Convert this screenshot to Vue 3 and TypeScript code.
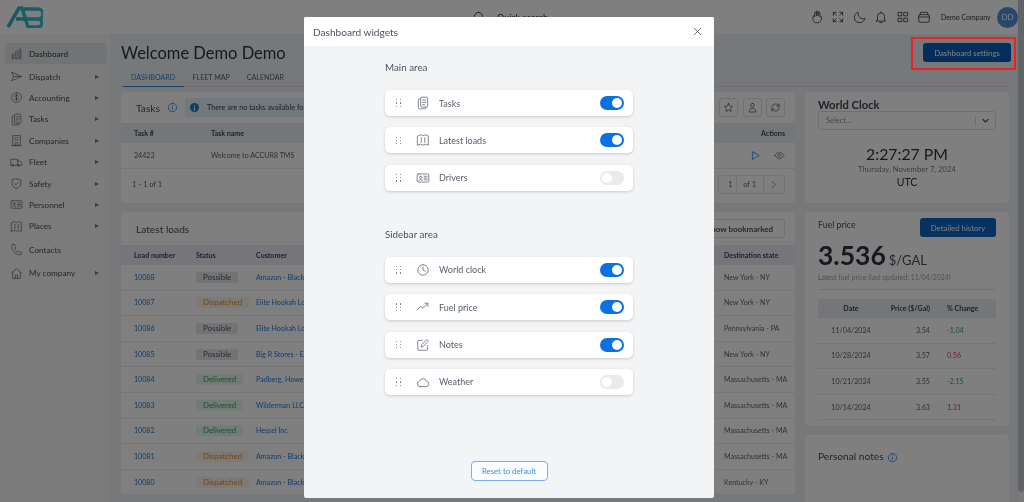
<script setup lang="ts">
const icons: Record<string, string[]> = {
  chart: ['M4 21v-7a1.5 1.5 0 0 1 3 0v7zM10.500 21V9a1.500 1.500 0 0 1 3 0v12zM17 21V5a1.500 1.500 0 0 1 3 0v16z'],
  send: ['M3 4l18 8-18 8 3.500-8zM6.500 12H21'],
  dollar: ['M12 3a9 9 0 1 0 0 18 9 9 0 1 0 0-18', 'M15 9.300c-.5-1-1.500-1.500-3-1.500-2 0-3 1-3 2.100s1 1.800 3 2.100 3 1 3 2.100-1 2.100-3 2.100c-1.500 0-2.500-.5-3-1.500M12 6v12'],
  tasks: ['M8 5h-2a2 2 0 0 0-2 2v13a2 2 0 0 0 2 2h9a2 2 0 0 0 2-2v-1', 'M8 4a2 2 0 0 1 2-2h8a2 2 0 0 1 2 2v13a2 2 0 0 1-2 2h-8a2 2 0 0 1-2-2z', 'M11 7h6M11 11h6M11 15h4'],
  building: ['M5 21V3h14v18zM3 21h18M9 7h2M13 7h2M9 11h2M13 11h2M10 21v-5h4v5'],
  truck: ['M2 6h12v11H2zM14 9h4l4 4v4h-8M7 17a2 2 0 1 0 0 .1M18 17a2 2 0 1 0 0 .1'],
  shield: ['M12 3l8 3v6c0 5-3.500 8-8 9-4.500-1-8-4-8-9V6z', 'M8.500 12l2.500 2.500 4.500-4.500'],
  card: ['M4 5h16a2 2 0 0 1 2 2v10a2 2 0 0 1-2 2H4a2 2 0 0 1-2-2V7a2 2 0 0 1 2-2z', 'M8 9a1.800 1.800 0 1 0 0 3.600A1.800 1.800 0 1 0 8 9M5 16c.5-2 5.500-2 6 0M14 9h5M14 12h5M14 15h5'],
  map: ['M3 5l5-2 4 2 4-2 5 2v16l-5-2-4 2-4-2-5 2zM9 8v8M15 8v8'],
  phone: ['M5 3l3-1 3 5-2 2c.5 3 3 6.500 6 8l2-2 5 3-1 3c-1 1-3 1-5 .5C9 20 3.500 13 3 7c0-2 1-3 2-4z'],
  house: ['M3 11l9-8 9 8M5 9.500V21h14V9.500M10 21v-6h4v6'],
  clock: ['M12 3a9 9 0 1 0 0 18 9 9 0 1 0 0-18', 'M12 7v5l3.500 2'],
  trend: ['M2 17l6-6 4 3 8-8M15 5.500h5.500V11'],
  edit: ['M20 13v6a2 2 0 0 1-2 2H5a2 2 0 0 1-2-2V6a2 2 0 0 1 2-2h6', 'M9 15l.7-3.500L18.500 2.700l2.800 2.800-8.800 8.800z'],
  cloud: ['M7 20h10.500a4.500 4.500 0 0 0 .8-8.900A6.500 6.500 0 0 0 6 10.500 4.800 4.800 0 0 0 7 20z'],
  hand: ['M8 11V5a1.500 1.500 0 0 1 3 0v5-7a1.500 1.500 0 0 1 3 0v7-5.500a1.500 1.500 0 0 1 3 0V12c1-1.500 3-1 3 .5 0 5-2 9.500-8 9.500-5 0-7-3-7-7v-3a1.500 1.500 0 0 1 3-1z'],
  expand: ['M4 9V4h5M4 4l5 5M20 9V4h-5M20 4l-5 5M4 15v5h5M4 20l5-5M20 15v5h-5M20 20l-5-5'],
  moon: ['M20 15A9 9 0 0 1 9 4a9 9 0 1 0 11 11z'],
  bell: ['M6 17V11a6 6 0 0 1 12 0v6l2 2H4zM10 21.500h4M12 3v2'],
  grid: ['M4 4h6v6H4zM14 4h6v6h-6zM4 14h6v6H4zM14 14h6v6h-6z'],
  wallet: ['M3 10a2 2 0 0 1 2-2h14a2 2 0 0 1 2 2v9a2 2 0 0 1-2 2H5a2 2 0 0 1-2-2zM5 8l1-4h12l1 4M3 12h18'],
  star: ['M12 3l2.800 5.800 6.200.9-4.500 4.400 1.100 6.300L12 17.400 6.400 20.400l1.100-6.300L3 9.700l6.200-.9z'],
  user: ['M12 3a4 4 0 1 0 0 8 4 4 0 1 0 0-8M5 21v-2c0-3 3-5 7-5s7 2 7 5v2z'],
  refresh: ['M4 11a8 8 0 0 1 14-4l2 2M20 4v5h-5M20 13a8 8 0 0 1-14 4l-2-2M4 20v-5h5'],
  play: ['M6 4l14 8-14 8z'],
  eye: ['M2 12c3-5 6.500-7 10-7s7 2 10 7c-3 5-6.500 7-10 7s-7-2-10-7z', 'M12 8.500a3.500 3.500 0 1 0 0 7 3.500 3.500 0 1 0 0-7'],
  info: ['M12 3a9 9 0 1 0 0 18 9 9 0 1 0 0-18', 'M12 11v5M12 7.500v.5'],
  right: ['M9 5l7 7-7 7'],
  down: ['M5 9l7 7 7-7'],
  search: ['M11 4a7 7 0 1 0 0 14 7 7 0 1 0 0-14M16 16l5 5'],
  close: ['M5 5l14 14M19 5L5 19'],
}

const nav = [
  { label: 'Dashboard', icon: 'chart', arrow: false, cls: 'active' },
  { label: 'Dispatch', icon: 'send', arrow: true, cls: '' },
  { label: 'Accounting', icon: 'dollar', arrow: true, cls: '' },
  { label: 'Tasks', icon: 'tasks', arrow: true, cls: '' },
  { label: 'Companies', icon: 'building', arrow: true, cls: '' },
  { label: 'Fleet', icon: 'truck', arrow: true, cls: '' },
  { label: 'Safety', icon: 'shield', arrow: true, cls: '' },
  { label: 'Personnel', icon: 'card', arrow: true, cls: '' },
  { label: 'Places', icon: 'map', arrow: true, cls: '' },
  { label: 'Contacts', icon: 'phone', arrow: false, cls: 'tall' },
  { label: 'My company', icon: 'house', arrow: true, cls: 'tall' },
]
const headerIcons = ['hand', 'expand', 'moon', 'bell', 'grid', 'wallet']
const loads = [
  ['10088', 'Possible', 'Amazon - Black Rock', 'New York - NY'],
  ['10087', 'Dispatched', 'Elite Hookah Lounge', 'New York - NY'],
  ['10086', 'Possible', 'Elite Hookah Lounge', 'Pennsylvania - PA'],
  ['10085', 'Possible', 'Big R Stores - East', 'New York - NY'],
  ['10084', 'Delivered', 'Padberg, Howell and Co', 'Massachusetts - MA'],
  ['10083', 'Delivered', 'Wilderman LLC', 'Massachusetts - MA'],
  ['10082', 'Delivered', 'Hessel Inc', 'Massachusetts - MA'],
  ['10081', 'Dispatched', 'Amazon - Black Rock', 'Massachusetts - MA'],
  ['10080', 'Dispatched', 'Amazon - Black Rock', 'Kentucky - KY'],
]
const fuel = [
  ['11/04/2024', '3.54', '-1.04', 'good'],
  ['10/28/2024', '3.57', '0.56', 'bad'],
  ['10/21/2024', '3.55', '-2.15', 'good'],
  ['10/14/2024', '3.63', '1.31', 'bad'],
]
const mainWidgets = [
  { label: 'Tasks', icon: 'tasks', on: true },
  { label: 'Latest loads', icon: 'map', on: true },
  { label: 'Drivers', icon: 'card', on: false },
]
const sideWidgets = [
  { label: 'World clock', icon: 'clock', on: true },
  { label: 'Fuel price', icon: 'trend', on: true },
  { label: 'Notes', icon: 'edit', on: true },
  { label: 'Weather', icon: 'cloud', on: false },
]
const groups = [
  { title: 'Main area', items: mainWidgets },
  { title: 'Sidebar area', items: sideWidgets },
]
</script>

<template>
  <div class="root">
    <div class="page">
      <header class="topbar">
        <svg class="logo" viewBox="0 0 36 22" fill="none">
          <defs>
            <linearGradient id="lg" x1="0" y1="0" x2="1" y2="0">
              <stop offset="0" stop-color="#3fa6c9" />
              <stop offset="1" stop-color="#2fc4cf" />
            </linearGradient>
          </defs>
          <path d="M1 21L12 2h3l6 19" stroke="url(#lg)" stroke-width="3.500" />
          <path d="M9 13h23M17 3h14a4 4 0 0 1 0 10 4 4 0 0 1 0 8H20" stroke="url(#lg)" stroke-width="3.500" />
        </svg>
        <div class="search">
          <svg class="ic14" viewBox="0 0 24 24"><path v-for="d in icons.search" :key="d" :d="d" /></svg>
          <span>Quick search...</span>
        </div>
        <div class="top-right">
          <svg v-for="name in headerIcons" :key="name" class="ic13" viewBox="0 0 24 24">
            <path v-for="d in icons[name]" :key="d" :d="d" />
          </svg>
          <span class="company">Demo Company</span>
          <span class="avatar">DD</span>
        </div>
      </header>

      <div class="below">
        <nav class="sidebar">
          <a v-for="item in nav" :key="item.label" class="nav-item" :class="item.cls">
            <svg class="ic13" viewBox="0 0 24 24"><path v-for="d in icons[item.icon]" :key="d" :d="d" /></svg>
            <span class="nav-label">{{ item.label }}</span>
            <span v-if="item.arrow" class="nav-arrow"></span>
          </a>
        </nav>

        <main class="content">
          <div class="head-row">
            <h1>Welcome Demo Demo</h1>
            <button class="primary settings">Dashboard settings</button>
          </div>
          <div class="tabs">
            <span class="tab current">DASHBOARD</span>
            <span class="tab">FLEET MAP</span>
            <span class="tab">CALENDAR</span>
          </div>

          <div class="columns">
            <div class="col-main">
              <section class="card tasks">
                <div class="card-head">
                  <h2>Tasks</h2>
                  <svg class="ic10 blue" viewBox="0 0 24 24"><path v-for="d in icons.info" :key="d" :d="d" /></svg>
                  <div class="alert">
                    <span class="alert-dot">i</span>
                    <span>There are no tasks available for you at the moment</span>
                  </div>
                  <div class="tool-btns">
                    <span v-for="n in ['star', 'user', 'refresh']" :key="n" class="tool">
                      <svg class="ic10" viewBox="0 0 24 24"><path v-for="d in icons[n]" :key="d" :d="d" /></svg>
                    </span>
                  </div>
                </div>
                <div class="t-row t-head task-grid">
                  <span>Task #</span><span>Task name</span><span class="end">Actions</span>
                </div>
                <div class="t-row task-grid task-body">
                  <span>24423</span><span>Welcome to ACCUR8 TMS</span>
                  <span class="row-actions">
                    <svg class="ic10 blue" viewBox="0 0 24 24"><path v-for="d in icons.play" :key="d" :d="d" /></svg>
                    <svg class="ic10" viewBox="0 0 24 24"><path v-for="d in icons.eye" :key="d" :d="d" /></svg>
                  </span>
                </div>
                <div class="t-foot">
                  <span>1 - 1 of 1</span>
                  <div class="pager">
                    <span class="p-cell num">1</span>
                    <span class="p-cell of">of 1</span>
                    <span class="p-cell">
                      <svg class="ic10" viewBox="0 0 24 24"><path v-for="d in icons.right" :key="d" :d="d" /></svg>
                    </span>
                  </div>
                </div>
              </section>

              <section class="card loads">
                <div class="card-head loads-head">
                  <h2>Latest loads</h2>
                  <button class="outline">Show bookmarked</button>
                </div>
                <div class="t-row t-head load-grid">
                  <span>Load number</span><span>Status</span><span>Customer</span><span></span><span>Destination state</span>
                </div>
                <div v-for="row in loads" :key="row[0]" class="t-row load-grid load-row">
                  <span class="link">{{ row[0] }}</span>
                  <span><span class="badge" :class="row[1].toLowerCase()">{{ row[1] }}</span></span>
                  <span class="link clip">{{ row[2] }}</span>
                  <span></span>
                  <span class="muted">{{ row[3] }}</span>
                </div>
              </section>
            </div>

            <div class="col-side">
              <section class="card clock">
                <h3>World Clock</h3>
                <div class="select">
                  <span>Select...</span>
                  <span class="sel-end">
                    <svg class="ic9" viewBox="0 0 24 24"><path v-for="d in icons.down" :key="d" :d="d" /></svg>
                  </span>
                </div>
                <div class="time">2:27:27 PM</div>
                <div class="date">Thursday, November 7, 2024</div>
                <div class="zone">UTC</div>
              </section>

              <section class="card fuel">
                <div class="fuel-top">
                  <span class="fuel-title">Fuel price</span>
                  <button class="primary history">Detailed history</button>
                </div>
                <div class="price"><b>3.536</b><span>$/GAL</span></div>
                <div class="updated">Latest fuel price (last updated: 11/04/2024)</div>
                <div class="f-row f-head">
                  <span>Date</span><span class="end">Price ($/Gal)</span><span class="pct">% Change</span>
                </div>
                <div v-for="row in fuel" :key="row[0]" class="f-row f-body">
                  <span>{{ row[0] }}</span><span class="end">{{ row[1] }}</span>
                  <span class="pct" :class="row[3]">{{ row[2] }}</span>
                </div>
              </section>

              <section class="card notes">
                <h2>Personal notes</h2>
                <svg class="ic10 blue" viewBox="0 0 24 24"><path v-for="d in icons.info" :key="d" :d="d" /></svg>
              </section>
            </div>
          </div>
        </main>
      </div>
    </div>
    <div class="scrollbar"><div class="thumb"></div></div>

    <div class="overlay"></div>
    <div class="marker"></div>

    <div class="modal">
      <div class="modal-head">
        <span>Dashboard widgets</span>
        <svg class="ic10 dark" viewBox="0 0 24 24"><path v-for="d in icons.close" :key="d" :d="d" /></svg>
      </div>
      <div class="modal-body">
        <div class="groups">
          <div v-for="g in groups" :key="g.title" class="group">
            <div class="group-title">{{ g.title }}</div>
            <div class="widget-list">
              <div v-for="w in g.items" :key="w.label" class="widget">
                <span class="dots"><i v-for="n in 6" :key="n"></i></span>
                <svg class="ic13 wicon" viewBox="0 0 24 24"><path v-for="d in icons[w.icon]" :key="d" :d="d" /></svg>
                <span class="w-label">{{ w.label }}</span>
                <span class="switch" :class="{ on: w.on }"><i></i></span>
              </div>
            </div>
          </div>
        </div>
        <button class="reset">Reset to default</button>
      </div>
    </div>
  </div>
</template>

<style>
html, body { margin: 0; overflow: hidden; }
</style>

<style scoped>
.root {
  position: relative;
  display: flex;
  width: 1024px;
  height: 502px;
  overflow: hidden;
  font-family: Lato, "Noto Sans", sans-serif;
  color: #3c4454;
  background: #eef1f5;
  filter: blur(.3px);
}
svg { fill: none; stroke: currentColor; stroke-width: 1.5; stroke-linecap: round; stroke-linejoin: round; flex: none; }
.ic14 { width: 14px; height: 14px; }
.ic13 { width: 14px; height: 14px; }
.ic10 { width: 11px; height: 11px; }
.ic9 { width: 9px; height: 9px; stroke-width: 3; }
.blue { color: #1f86ee; stroke-width: 1.8; }
.dark { color: #333; }
.page { flex: 1; min-width: 0; display: flex; flex-direction: column; }
.scrollbar { width: 6px; background: #f6f6f6; }
.thumb { height: 492px; background: #c2c6cc; border-radius: 0 0 3px 3px; }

.topbar { height: 34px; flex: none; display: flex; align-items: center; background: #fff; }
.logo { width: 36px; height: 22px; margin-left: 7px; stroke-linecap: butt; stroke-linejoin: miter; }
.search { display: flex; align-items: center; gap: 11px; margin-left: 429px; font-size: 9px; color: #333; }
.top-right { margin-left: auto; display: flex; align-items: center; gap: 7.500px; }
.company { font-size: 7px; margin-left: 2.500px; margin-right: -1.500px; width: 50px; color: #333; white-space: nowrap; }
.avatar { width: 21px; height: 21px; border-radius: 50%; background: #4f8fdc; color: #fff; font-size: 8px; display: flex; align-items: center; justify-content: center; }

.below { flex: 1; min-height: 0; display: flex; }
.sidebar { width: 110px; flex: none; box-sizing: border-box; padding: 9px 3px 0 5px; background: #f6f7f9; }
.nav-item { display: flex; align-items: center; height: 21.400px; padding: 0 5px; font-size: 8.200px; color: #444d5c; border-radius: 4px; }
.nav-item.active { background: #e5e7ea; margin-bottom: 1.500px; color: #333; }
.nav-item.tall { margin-top: 2px; }
.nav-item svg { width: 13px; height: 13px; color: #5c6470; stroke-width: 1.300; }
.nav-label { margin-left: 6px; flex: 1; }
.nav-arrow { width: 0; height: 0; border-left: 4px solid #777; border-top: 2.500px solid transparent; border-bottom: 2.500px solid transparent; margin-right: 3px; }

.content { flex: 1; min-width: 0; box-sizing: border-box; padding: 0 8px 0 11px; }
.head-row { display: flex; justify-content: space-between; align-items: flex-start; height: 33px; padding-top: 9px; }
h1 { margin: 0; font-size: 16.500px; font-weight: 400; line-height: 20px; color: #2b3340; }
.primary { border: 0; border-radius: 3px; background: #0a5bb5; color: #fff; font: inherit; }
.settings { width: 88px; height: 19px; font-size: 7.800px; margin-right: -1px; }
.tabs { display: flex; border-bottom: 1px solid #dde1e6; height: 20px; box-sizing: border-box; margin-top: -9px; align-items: stretch; }
.tab { padding: 4px 8.500px 0; font-size: 7.100px; line-height: 14px; color: #555e6c; box-sizing: border-box; }
.tab.current { width: 61px; margin-left: 2px; padding: 4px 0 0 8px; color: #2f7fd1; border-bottom: 1px solid #2f7fd1; margin-bottom: -1px; }
.columns { display: grid; grid-template-columns: 674px 204px; gap: 10px; margin-top: 5px; }
.col-main, .col-side { display: flex; flex-direction: column; gap: 9px; min-width: 0; }
.card { background: #fff; border-radius: 4px; box-shadow: 0 0 2px rgba(0, 0, 0, .06); }
.tasks { height: 111px; }
.card-head { height: 31px; display: flex; align-items: center; padding: 0 10px 0 15px; box-sizing: border-box; }
h2 { margin: 0; font-size: 10.200px; font-weight: 400; color: #444d5c; }
.card-head svg { margin-left: 7px; }
.alert { display: flex; align-items: center; gap: 8px; margin-left: 7px; height: 19px; width: 300px; padding-left: 5px; background: #e3f2fa; border-radius: 3px; font-size: 7.300px; color: #33414f; }
.alert-dot { width: 9px; height: 9px; border-radius: 50%; background: #1b7fc4; color: #fff; font-size: 7px; font-weight: 700; display: flex; align-items: center; justify-content: center; }
.tool-btns { margin-left: auto; display: flex; gap: 4.500px; }
.tool { width: 19px; height: 19px; box-sizing: border-box; border: 1px solid #dde0e4; border-radius: 3px; display: flex; align-items: center; justify-content: center; }
.tool svg { margin: 0; }
.t-row { display: grid; align-items: center; padding: 0 13px; font-size: 7.100px; color: #565e6b; }
.t-head { height: 20px; background: #e9edf2; font-weight: 700; color: #3c4454; }
.task-grid { grid-template-columns: 77px 1fr 100px; padding-right: 10px; }
.task-body { height: 26px; border-bottom: 1px solid #e8eaee; box-sizing: border-box; }
.end { text-align: right; }
.row-actions { display: flex; justify-content: flex-end; gap: 13px; }
.t-foot { display: flex; align-items: center; justify-content: space-between; padding: 6px 10px 0 11px; font-size: 7.500px; color: #565e6b; }
.pager { display: flex; height: 19px; border: 1px solid #e2e4e8; border-radius: 3px; box-sizing: border-box; width: 67px; }
.p-cell { display: flex; align-items: center; justify-content: center; width: 21px; }
.p-cell.num { width: 18px; justify-content: flex-end; border-right: 1px solid #e2e4e8; padding-right: 3px; box-sizing: border-box; }
.p-cell.of { width: 28px; border-right: 1px solid #e2e4e8; box-sizing: border-box; }
.loads-head { height: 33px; justify-content: space-between; }
.outline { width: 90px; height: 19px; border: 1px solid #dde0e4; border-radius: 3px; background: #fff; font: inherit; font-size: 8px; font-weight: 700; color: #4a5260; padding: 0; }
.load-grid { grid-template-columns: 62px 60px 140px 1fr 71px; padding-right: 0; }
.load-row { height: 25.600px; box-sizing: border-box; border-bottom: 1px solid #ebedf0; }
.link { color: #1b78d8; }
.clip { white-space: nowrap; overflow: hidden; }
.muted { color: #5d6572; white-space: nowrap; }
.badge { display: inline-block; font-size: 7.900px; line-height: 11px; padding: 0 7px; border-radius: 3px; }
.possible { background: #e3e6ea; color: #505865; }
.dispatched { background: #fcf3e7; color: #e08b2e; }
.delivered { background: #e7f6ed; color: #2ea55c; }

.clock { height: 111px; padding: 6px 13px 0; box-sizing: border-box; text-align: center; }
h3 { margin: 0; text-align: left; font-size: 11.200px; line-height: 13px; font-weight: 700; color: #3c4454; }
.select { display: flex; align-items: center; justify-content: space-between; height: 19px; box-sizing: border-box; border: 1px solid #dcdfe3; border-radius: 3px; padding-left: 7px; font-size: 7.500px; color: #8a909a; text-align: left; }
.sel-end { border-left: 1px solid #dcdfe3; height: 10px; width: 19px; display: flex; align-items: center; justify-content: center; color: #444; }
.time { font-size: 15.800px; line-height: 20px; margin-top: 14px; color: #2b3340; }
.date { font-size: 7.700px; line-height: 10px; color: #767d88; }
.zone { font-size: 10.500px; line-height: 14px; margin-top: 1px; color: #2b3340; }

.fuel { height: 214px; padding: 7px 13px 0; box-sizing: border-box; }
.fuel-top { display: flex; justify-content: space-between; align-items: flex-start; margin-top: -1px; }
.fuel-title { font-size: 8.800px; line-height: 12px; padding-top: 1px; color: #444d5c; }
.history { width: 76px; height: 19px; font-size: 7.800px; background: #0a65c2; }
.price { display: flex; align-items: baseline; gap: 3px; margin-top: 2px; height: 32px; line-height: 32px; color: #2b3340; }
.price b { font-size: 26.500px; font-weight: 700; }
.price span { font-size: 13px; color: #444d5c; }
.updated { font-size: 6.900px; line-height: 10px; padding-bottom: 7px; border-bottom: 1px solid #dfe2e6; color: #9ca2ab; white-space: nowrap; margin-top: 1px; }
.f-row { display: grid; grid-template-columns: 66px 46px 1fr; align-items: center; font-size: 7.100px; color: #565e6b; text-align: center; }
.f-head { height: 19px; background: #e9edf2; margin-top: 9px; font-weight: 700; color: #3c4454; }
.f-body { height: 25.600px; box-sizing: border-box; border-bottom: 1px solid #e8eaee; }
.pct { text-align: left; padding-left: 17px; }
.good { color: #2ea55c; }
.bad { color: #d9454f; }
.notes { height: 90px; padding: 15px 13px 0; box-sizing: border-box; display: flex; align-items: flex-start; gap: 3px; }
.notes svg { margin-top: 2px; }

.overlay { position: absolute; inset: 0; background: rgba(0, 0, 0, .5); }
.marker { position: absolute; left: 911px; top: 37px; width: 105px; height: 33px; box-sizing: border-box; border: 2px solid #ee2024; }
.modal { position: absolute; left: 304px; top: 17px; width: 410px; height: 481px; display: flex; flex-direction: column; background: #f3f4f6; border-radius: 2px; overflow: hidden; }
.modal-head { height: 29px; flex: none; display: flex; align-items: center; justify-content: space-between; padding: 0 11px 0 9px; background: #fff; font-size: 10.100px; color: #4a5260; }
.modal-body { flex: 1; display: flex; flex-direction: column; align-items: center; min-height: 0; }
.groups { width: 248px; display: flex; flex-direction: column; gap: 36px; padding-top: 14px; flex: 1; }
.group-title { font-size: 9.800px; line-height: 14px; color: #4a5260; margin-bottom: 16px; }
.widget-list { display: flex; flex-direction: column; gap: 11.400px; }
.widget { height: 26px; display: flex; align-items: center; background: #fff; border-radius: 5px; box-shadow: 0 1px 3px rgba(0, 0, 0, .18); padding: 0 9px 0 11px; }
.dots { width: 5px; display: grid; grid-template-columns: 1.200px 1.200px; gap: 2px 2.400px; }
.dots i { width: 1.200px; height: 1.200px; background: #6f747b; border-radius: 50%; }
.wicon { margin-left: 15px; color: #5a6270; stroke-width: 1.300; }
.w-label { margin-left: 9px; flex: 1; font-size: 9px; color: #555d6b; }
.switch { width: 24px; height: 14px; border-radius: 7px; background: #e9eaec; display: flex; align-items: center; padding: 2px; box-sizing: border-box; }
.switch i { width: 10px; height: 10px; border-radius: 50%; background: #fff; }
.switch.on { background: #0a72e0; justify-content: flex-end; }
.reset { width: 77px; height: 20px; flex: none; margin: 0 0 17px 0; background: #fafcff; border: 1px solid #74b3f3; border-radius: 4px; font: inherit; font-size: 7.800px; color: #3f8ce0; padding: 0; }
</style>
